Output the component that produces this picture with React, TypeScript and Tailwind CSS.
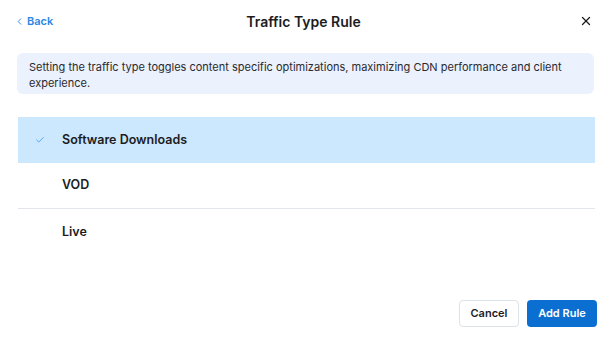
import { Check, ChevronLeft, X } from "lucide-react";

const options = ["Software Downloads", "VOD", "Live"];

export default function App() {
  const selected = "Software Downloads";

  return (
    <div className="w-[608px] h-[340px] bg-white flex flex-col font-['Inter',sans-serif] text-[#1c1c1e]">
      <div className="flex items-center justify-between h-[42px] pl-[14px] pr-[15px]">
        <button className="flex items-center gap-[2px] text-[#2b87e3] text-[11px] font-semibold w-[60px]">
          <ChevronLeft size={11} strokeWidth={2} />
          Back
        </button>
        <h1 className="text-[14px] font-semibold">Traffic Type Rule</h1>
        <div className="w-[60px] flex justify-end">
          <X size={14} strokeWidth={2.2} />
        </div>
      </div>

      <div className="ml-[17px] mr-[14px] mt-[11px] rounded-[6px] bg-[#ebf1fd] px-[12px] pt-[6px] pb-[3px] text-[11px] leading-[16px] text-[#2a2a2e]">
        Setting the traffic type toggles content specific optimizations, maximizing CDN performance and client
        experience.
      </div>

      <div className="ml-[18px] mr-[13px] mt-[23px] flex flex-col">
        {options.map((o, i) => (
          <div
            key={o}
            className={
              "flex items-center h-[46px] " +
              (o === selected ? "bg-[#cce8fe] " : "") +
              (i === 1 ? "border-b border-[#e3e6ea]" : "")
            }
          >
            <div className="w-[44px] flex justify-center">
              {o === selected && <Check size={10} strokeWidth={2} className="text-[#3a9bf0]" />}
            </div>
            <span className="text-[12.5px] font-semibold">{o}</span>
          </div>
        ))}
      </div>

      <div className="mt-auto mb-[13px] mr-[11px] flex justify-end gap-[8px]">
        <button className="h-[27px] w-[60px] rounded-[4px] border border-[#dde3e8] text-[11px] font-semibold">
          Cancel
        </button>
        <button className="h-[27px] w-[70px] rounded-[4px] bg-[#0a6fd1] text-white text-[11px] font-semibold">
          Add Rule
        </button>
      </div>
    </div>
  );
}
